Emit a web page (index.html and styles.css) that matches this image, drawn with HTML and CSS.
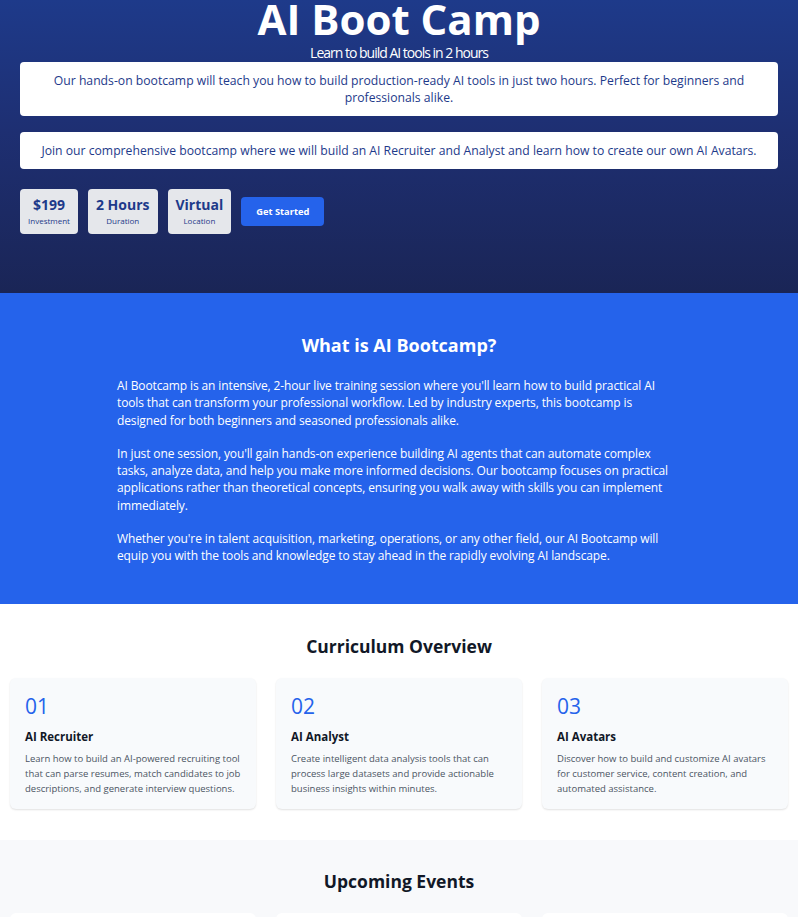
FILE: index.html
```html
<!DOCTYPE html>
<html lang="en">
<head>
<meta charset="utf-8">
<title>AI Boot Camp</title>
<link rel="stylesheet" href="styles.css">
</head>
<body>
<header class="hero">
  <div class="hero-inner">
    <h1 class="hero-title">AI Boot Camp</h1>
    <p class="hero-sub">Learn to build AI tools in 2 hours</p>
    <div class="hero-box">Our hands-on bootcamp will teach you how to build production-ready AI tools in just two hours. Perfect for beginners and professionals alike.</div>
    <div class="hero-box">Join our comprehensive bootcamp where we will build an AI Recruiter and Analyst and learn how to create our own AI Avatars.</div>
    <div class="stats">
      <div class="stat"><div class="stat-value">$199</div><div class="stat-label">Investment</div></div>
      <div class="stat"><div class="stat-value">2 Hours</div><div class="stat-label">Duration</div></div>
      <div class="stat"><div class="stat-value">Virtual</div><div class="stat-label">Location</div></div>
      <a class="btn" href="#">Get Started</a>
    </div>
  </div>
</header>

<section class="about">
  <h2 class="about-title">What is AI Bootcamp?</h2>
  <div class="about-text">
    <p>AI Bootcamp is an intensive, 2-hour live training session where you'll learn how to build practical AI tools that can transform your professional workflow. Led by industry experts, this bootcamp is designed for both beginners and seasoned professionals alike.</p>
    <p>In just one session, you'll gain hands-on experience building AI agents that can automate complex tasks, analyze data, and help you make more informed decisions. Our bootcamp focuses on practical applications rather than theoretical concepts, ensuring you walk away with skills you can implement immediately.</p>
    <p>Whether you're in talent acquisition, marketing, operations, or any other field, our AI Bootcamp will equip you with the tools and knowledge to stay ahead in the rapidly evolving AI landscape.</p>
  </div>
</section>

<section class="curriculum">
  <h2 class="section-title">Curriculum Overview</h2>
  <div class="cards">
    <div class="card">
      <div class="card-num">01</div>
      <h3 class="card-title">AI Recruiter</h3>
      <p class="card-text">Learn how to build an AI-powered recruiting tool that can parse resumes, match candidates to job descriptions, and generate interview questions.</p>
    </div>
    <div class="card">
      <div class="card-num">02</div>
      <h3 class="card-title">AI Analyst</h3>
      <p class="card-text">Create intelligent data analysis tools that can process large datasets and provide actionable business insights within minutes.</p>
    </div>
    <div class="card">
      <div class="card-num">03</div>
      <h3 class="card-title">AI Avatars</h3>
      <p class="card-text">Discover how to build and customize AI avatars for customer service, content creation, and automated assistance.</p>
    </div>
  </div>
</section>

<section class="events">
  <h2 class="section-title">Upcoming Events</h2>
  <div class="cards">
    <div class="event-card"></div>
    <div class="event-card"></div>
    <div class="event-card"></div>
  </div>
</section>
</body>
</html>
```

FILE: styles.css
```css
* { box-sizing: border-box; }
html, body { margin: 0; padding: 0; }
body {
  font-family: "Open Sans", "Noto Sans", "Liberation Sans", sans-serif;
  color: #111827;
  background: #fff;
}

.hero {
  background: linear-gradient(180deg, #1e3a8a 0%, #1e2f72 45%, #1a2556 100%);
  height: 293px;
  overflow: hidden;
}
.hero-inner {
  padding: 0 20px;
  display: flex;
  flex-direction: column;
  align-items: stretch;
}
.hero-title {
  margin: 0;
  font-size: 42px;
  line-height: 38px;
  font-weight: 700;
  color: #fff;
  text-align: center;
}
.hero-sub {
  margin: 7px 0 0;
  font-size: 14px;
  line-height: 16px;
  letter-spacing: -1px;
  color: #fff;
  text-align: center;
}
.hero-box {
  background: #fff;
  border-radius: 4px;
  color: #1e3a8a;
  text-align: center;
  font-size: 12.2px;
  line-height: 17px;
  padding: 10px 16px;
  margin-top: 16px;
}
.hero-sub + .hero-box { margin-top: 1px; }

.stats {
  display: flex;
  align-items: center;
  gap: 10px;
  margin-top: 20px;
}
.stat {
  background: #e5e7eb;
  border-radius: 4px;
  padding: 6px 8px 7px;
  text-align: center;
  color: #1e3a8a;
}
.stat-value {
  font-size: 14px;
  font-weight: 700;
  line-height: 19px;
}
.stat-label {
  font-size: 8px;
  line-height: 13px;
}
.btn {
  display: inline-block;
  background: #2563eb;
  color: #fff;
  text-decoration: none;
  font-size: 9.3px;
  font-weight: 700;
  padding: 8px 15px;
  border-radius: 4px;
  line-height: 13px;
}

.about {
  background: #2563eb;
  color: #fff;
  padding: 40px 20px 39px;
}
.about-title {
  margin: 0 0 20px;
  font-size: 18px;
  line-height: 24px;
  font-weight: 700;
  text-align: center;
}
.about-text {
  max-width: 564px;
  margin: 0 auto;
}
.about-text p {
  margin: 0 0 16px;
  font-size: 12px;
  letter-spacing: -0.12px;
  line-height: 17.3px;
}
.about-text p:last-child { margin-bottom: 0; }

.curriculum {
  padding: 30px 10px 31px;
}
.section-title {
  margin: 0 0 20px;
  font-size: 17.5px;
  line-height: 24px;
  font-weight: 700;
  text-align: center;
  color: #111827;
}
.cards {
  display: grid;
  grid-template-columns: repeat(3, 1fr);
  gap: 20px;
}
.card {
  background: #f8fafc;
  border-radius: 6px;
  box-shadow: 0 1px 2px rgba(0,0,0,0.12);
  padding: 14px 15px 13px;
}
.card-num {
  font-size: 21px;
  line-height: 28px;
  color: #2563eb;
  font-weight: 400;
}
.card-title {
  margin: 8px 0 5px;
  font-size: 11.5px;
  line-height: 18px;
  font-weight: 700;
}
.card-text {
  margin: 0;
  font-size: 9.5px;
  line-height: 15px;
  color: #4b5563;
}

.events {
  background: #f8f9fb;
  padding: 29px 10px 0;
}
.event-card {
  background: #fff;
  border-radius: 6px;
  height: 60px;
}
```
